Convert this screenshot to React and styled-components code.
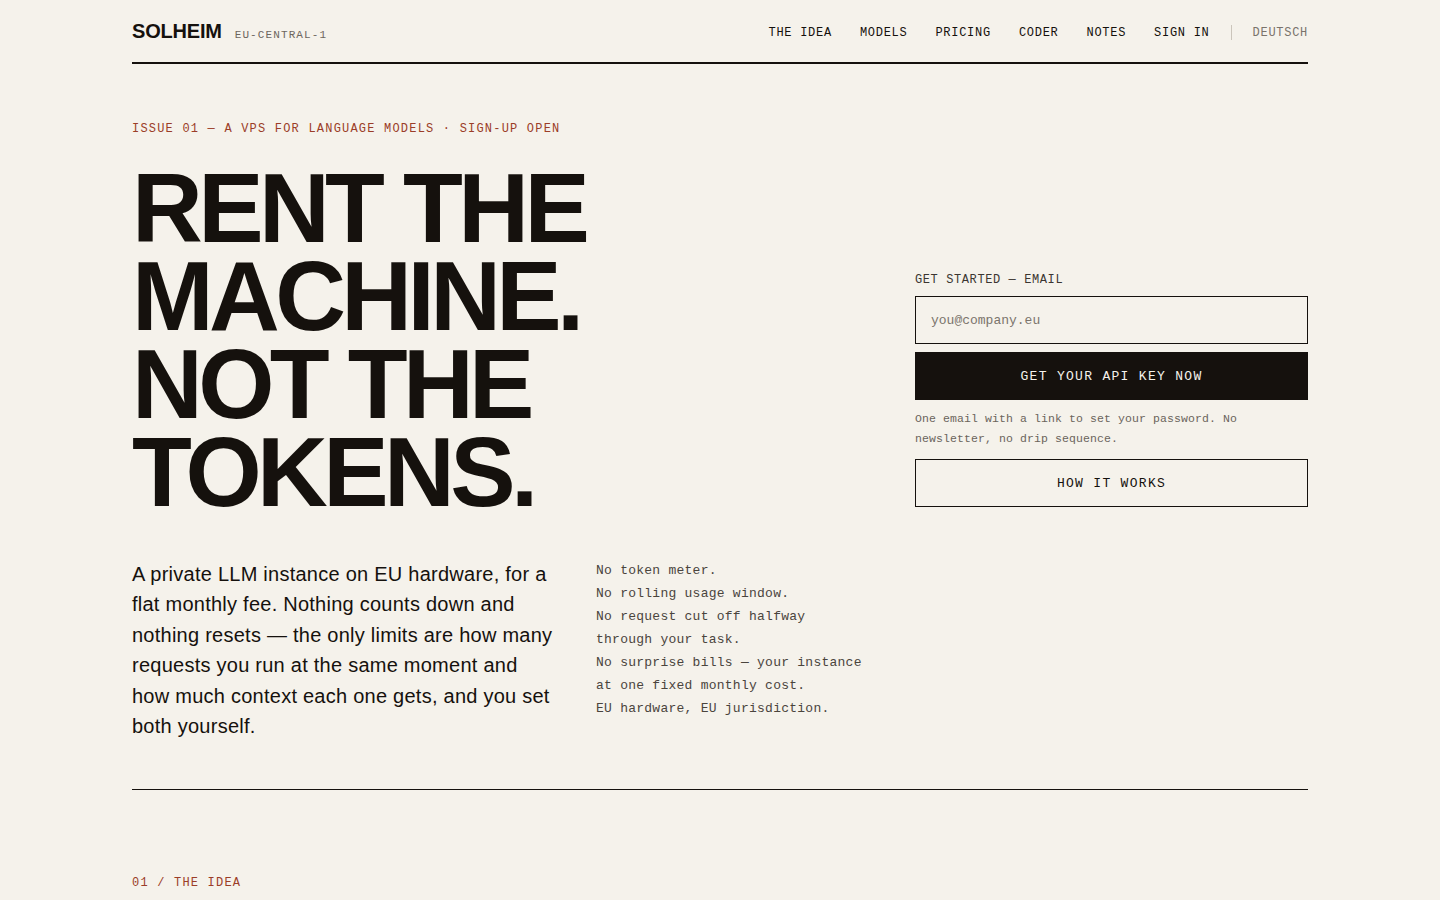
import React from "react";
import styled, { createGlobalStyle } from "styled-components";

const ink = "#15110d";
const paper = "#f5f2eb";
const rust = "#9b3d28";
const mono = `"Liberation Mono", "DejaVu Sans Mono", monospace`;
const sans = `"Liberation Sans", Arial, sans-serif`;

const GlobalStyle = createGlobalStyle`
  * { box-sizing: border-box; }
  html, body {
    margin: 0;
    background: ${paper};
    color: ${ink};
    font-family: ${sans};
  }
`;

const navItems = ["The idea", "Models", "Pricing", "Coder", "Notes", "Sign in"];

const promises = [
  "No token meter.",
  "No rolling usage window.",
  "No request cut off halfway through your task.",
  "No surprise bills — your instance at one fixed monthly cost.",
  "EU hardware, EU jurisdiction.",
];

const App = () => {
  return (
    <>
      <GlobalStyle />
      <Page>
        <Header>
          <Brand>
            <Logo>SOLHEIM</Logo>
            <Region>EU-CENTRAL-1</Region>
          </Brand>
          <Nav>
            {navItems.map((item) => (
              <NavLink key={item} href="#">
                {item}
              </NavLink>
            ))}
            <NavDivider />
            <NavLink href="#" muted>
              Deutsch
            </NavLink>
          </Nav>
        </Header>

        <Hero>
          <Eyebrow>ISSUE 01 — A VPS FOR LANGUAGE MODELS · SIGN-UP OPEN</Eyebrow>
          <HeroTop>
            <Headline>
              RENT THE
              <br />
              MACHINE.
              <br />
              NOT THE
              <br />
              TOKENS.
            </Headline>
            <SignupForm onSubmit={(e) => e.preventDefault()}>
              <FieldLabel htmlFor="email">Get started — email</FieldLabel>
              <EmailInput id="email" type="email" placeholder="you@company.eu" />
              <Button type="submit" primary>
                Get your API key now
              </Button>
              <FormNote>
                One email with a link to set your password. No newsletter, no
                drip sequence.
              </FormNote>
              <Button type="button">How it works</Button>
            </SignupForm>
          </HeroTop>
          <HeroBottom>
            <Lede>
              A private LLM instance on EU hardware, for a flat monthly fee.
              Nothing counts down and nothing resets — the only limits are how
              many requests you run at the same moment and how much context
              each one gets, and you set both yourself.
            </Lede>
            <PromiseList>
              {promises.map((p) => (
                <li key={p}>{p}</li>
              ))}
            </PromiseList>
          </HeroBottom>
        </Hero>

        <Section>
          <SectionLabel>01 / THE IDEA</SectionLabel>
        </Section>
      </Page>
    </>
  );
};

const Page = styled.div`
  width: 1176px;
  margin: 0 auto;
`;

const Header = styled.header`
  height: 64px;
  display: flex;
  align-items: center;
  justify-content: space-between;
  border-bottom: 2px solid ${ink};
`;

const Brand = styled.div`
  display: flex;
  align-items: baseline;
  gap: 13px;
`;

const Logo = styled.div`
  font-family: ${sans};
  font-weight: 700;
  font-size: 20px;
  letter-spacing: -0.01em;
`;

const Region = styled.span`
  font-family: ${mono};
  font-size: 11px;
  letter-spacing: 0.1em;
  color: #6d665e;
`;

const Nav = styled.nav`
  display: flex;
  align-items: center;
  gap: 28px;
  padding-top: 3px;
`;

const NavLink = styled.a`
  font-family: ${mono};
  font-size: 12px;
  letter-spacing: 0.06em;
  text-transform: uppercase;
  text-decoration: none;
  color: ${(p) => (p.muted ? "#7a736b" : ink)};
`;

const NavDivider = styled.span`
  width: 1px;
  height: 15px;
  background: #cbc5bb;
  margin: 0 -7px;
`;

const Hero = styled.section`
  padding: 56px 0 48px;
`;

const Eyebrow = styled.p`
  margin: 0 0 26px;
  font-family: ${mono};
  font-size: 12px;
  line-height: 18px;
  letter-spacing: 0.1em;
  color: ${rust};
`;

const HeroTop = styled.div`
  display: grid;
  grid-template-columns: 1fr 393px;
  align-items: end;
`;

const Headline = styled.h1`
  margin: 0;
  font-family: ${sans};
  font-weight: 700;
  font-size: 98px;
  line-height: 88px;
  letter-spacing: -0.047em;
  color: ${ink};
`;

const SignupForm = styled.form`
  display: flex;
  flex-direction: column;
  padding-bottom: 9px;
`;

const FieldLabel = styled.label`
  font-family: ${mono};
  font-size: 12px;
  line-height: 18px;
  letter-spacing: 0.05em;
  text-transform: uppercase;
  color: #3b3631;
  margin-bottom: 7px;
`;

const EmailInput = styled.input`
  height: 48px;
  padding: 0 15px;
  border: 1.5px solid ${ink};
  border-radius: 0;
  background: transparent;
  font-family: ${mono};
  font-size: 13px;
  color: ${ink};
  outline: none;
  &::placeholder {
    color: #7b746c;
  }
`;

const Button = styled.button`
  height: 48px;
  margin-top: ${(p) => (p.primary ? "8px" : "0")};
  border: 1.5px solid ${ink};
  border-radius: 0;
  background: ${(p) => (p.primary ? ink : "transparent")};
  color: ${(p) => (p.primary ? "#f5f2eb" : ink)};
  font-family: ${mono};
  font-size: 13px;
  letter-spacing: 0.1em;
  text-transform: uppercase;
  cursor: pointer;
`;

const FormNote = styled.p`
  margin: 9px 0 10px;
  font-family: ${mono};
  font-size: 11.5px;
  line-height: 20px;
  letter-spacing: 0.1px;
  color: #6b645c;
`;

const HeroBottom = styled.div`
  display: flex;
  gap: 36px;
  margin-top: 43px;
`;

const Lede = styled.p`
  width: 428px;
  margin: 0;
  font-family: ${sans};
  font-size: 20px;
  line-height: 30.4px;
  letter-spacing: 0.25px;
  color: ${ink};
`;

const PromiseList = styled.ul`
  width: 272px;
  margin: 0;
  padding: 0;
  list-style: none;
  font-family: ${mono};
  font-size: 13px;
  line-height: 23px;
  letter-spacing: 0.25px;
  color: #4a443d;
`;

const Section = styled.section`
  border-top: 1.5px solid ${ink};
  padding-top: 84px;
`;

const SectionLabel = styled.p`
  margin: 0;
  font-family: ${mono};
  font-size: 12px;
  line-height: 18px;
  letter-spacing: 0.1em;
  color: ${rust};
`;

export default App;
